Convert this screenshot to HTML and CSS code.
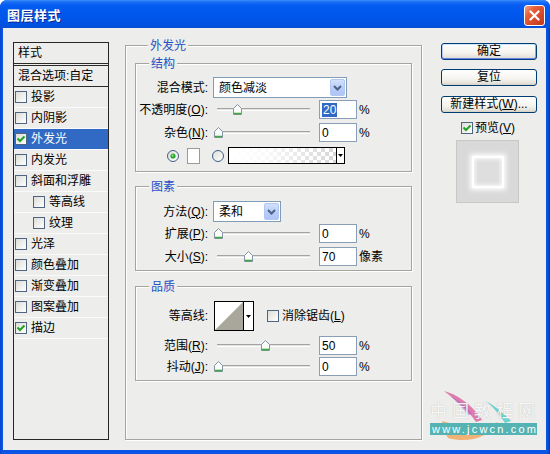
FILE: index.html
```html
<!DOCTYPE html>
<html>
<head>
<meta charset="utf-8">
<title>图层样式</title>
<link rel="stylesheet" href="styles.css">
</head>
<body>
<div class="window">
  <div class="titlebar">
    <span class="title">图层样式</span>
    <span class="close"><svg width="11" height="11" viewBox="0 0 11 11"><path d="M1.5 1.5l8 8M9.5 1.5l-8 8" stroke="#fff" stroke-width="2.2" stroke-linecap="round"/></svg></span>
  </div>
  <div class="client">
    <div class="stylelist">
      <div class="li head">样式</div>
      <div class="li blend">混合选项:自定</div>
      <div class="li"><span class="cb"></span>投影</div>
      <div class="li"><span class="cb"></span>内阴影</div>
      <div class="li sel"><span class="cb"><svg width="10" height="10" viewBox="0 0 10 10"><path d="M1.5 4.5l2.5 2.5 4.5-4.5" fill="none" stroke="#21A121" stroke-width="2"/></svg></span>外发光</div>
      <div class="li"><span class="cb"></span>内发光</div>
      <div class="li"><span class="cb"></span>斜面和浮雕</div>
      <div class="li sub"><span class="cb"></span>等高线</div>
      <div class="li sub"><span class="cb"></span>纹理</div>
      <div class="li"><span class="cb"></span>光泽</div>
      <div class="li"><span class="cb"></span>颜色叠加</div>
      <div class="li"><span class="cb"></span>渐变叠加</div>
      <div class="li"><span class="cb"></span>图案叠加</div>
      <div class="li"><span class="cb"><svg width="10" height="10" viewBox="0 0 10 10"><path d="M1.5 4.5l2.5 2.5 4.5-4.5" fill="none" stroke="#21A121" stroke-width="2"/></svg></span>描边</div>
    </div>

    <div class="group outer">
      <div class="gtitle">外发光</div>

      <div class="group inner g1">
        <div class="gtitle">结构</div>
        <div class="row r-blend">
          <span class="lbl">混合模式:</span>
          <div class="combo w-blend"><span class="ctext">颜色减淡</span><span class="cbtn"><svg width="9" height="6" viewBox="0 0 9 6"><path d="M1 1l3.5 3.5L8 1" fill="none" stroke="#4D6185" stroke-width="2"/></svg></span></div>
        </div>
        <div class="row r-op">
          <span class="lbl">不透明度(<u>O</u>):</span>
          <div class="slider"><div class="track"></div><svg class="thumb" style="left:19px" width="9" height="11" viewBox="0 0 9 11"><path d="M4.5 .5L8.5 4.5V10.5H.5V4.5Z" fill="#FAFCFA" stroke="#8393A3"/><path d="M1 9.5H8" stroke="#3DA83D" stroke-width="1.6"/></svg></div>
          <span class="inp"><span class="hl">20</span></span><span class="unit">%</span>
        </div>
        <div class="row r-noise">
          <span class="lbl">杂色(<u>N</u>):</span>
          <div class="slider"><div class="track"></div><svg class="thumb" style="left:0px" width="9" height="11" viewBox="0 0 9 11"><path d="M4.5 .5L8.5 4.5V10.5H.5V4.5Z" fill="#FAFCFA" stroke="#8393A3"/><path d="M1 9.5H8" stroke="#3DA83D" stroke-width="1.6"/></svg></div>
          <span class="inp">0</span><span class="unit">%</span>
        </div>
        <div class="row r-color">
          <svg class="radio" width="12" height="12" viewBox="0 0 12 12"><defs><linearGradient id="rg1" x1="0" y1="0" x2="1" y2="1"><stop offset="0" stop-color="#DCDCD7"/><stop offset="1" stop-color="#fff"/></linearGradient></defs><circle cx="6" cy="6" r="5.5" fill="url(#rg1)" stroke="#3E5D85"/><circle cx="6" cy="6" r="2.6" fill="#2EA82E"/><circle cx="5.5" cy="5.5" r="1" fill="#9BE09B"/></svg>
          <span class="swatch"></span>
          <svg class="radio r2" width="12" height="12" viewBox="0 0 12 12"><circle cx="6" cy="6" r="5.5" fill="url(#rg1)" stroke="#3E5D85"/></svg>
          <div class="grad"><span class="gfill"></span><span class="garrow"><svg width="5" height="3" viewBox="0 0 5 3"><path d="M0 0H5L2.5 3Z" fill="#000"/></svg></span></div>
        </div>
      </div>

      <div class="group inner g2">
        <div class="gtitle">图素</div>
        <div class="row r-method">
          <span class="lbl">方法(<u>Q</u>):</span>
          <div class="combo w-method"><span class="ctext">柔和</span><span class="cbtn"><svg width="9" height="6" viewBox="0 0 9 6"><path d="M1 1l3.5 3.5L8 1" fill="none" stroke="#4D6185" stroke-width="2"/></svg></span></div>
        </div>
        <div class="row r-spread">
          <span class="lbl">扩展(<u>P</u>):</span>
          <div class="slider"><div class="track"></div><svg class="thumb" style="left:0px" width="9" height="11" viewBox="0 0 9 11"><path d="M4.5 .5L8.5 4.5V10.5H.5V4.5Z" fill="#FAFCFA" stroke="#8393A3"/><path d="M1 9.5H8" stroke="#3DA83D" stroke-width="1.6"/></svg></div>
          <span class="inp">0</span><span class="unit">%</span>
        </div>
        <div class="row r-size">
          <span class="lbl">大小(<u>S</u>):</span>
          <div class="slider"><div class="track"></div><svg class="thumb" style="left:30px" width="9" height="11" viewBox="0 0 9 11"><path d="M4.5 .5L8.5 4.5V10.5H.5V4.5Z" fill="#FAFCFA" stroke="#8393A3"/><path d="M1 9.5H8" stroke="#3DA83D" stroke-width="1.6"/></svg></div>
          <span class="inp">70</span><span class="unit">像素</span>
        </div>
      </div>

      <div class="group inner g3">
        <div class="gtitle">品质</div>
        <div class="row r-contour">
          <span class="lbl">等高线:</span>
          <div class="contour"><svg class="cprev" width="28" height="28" viewBox="0 0 28 28"><rect width="28" height="28" fill="#fff"/><path d="M0 28L28 0V28Z" fill="#A9A69C"/></svg><span class="carrow"><svg width="5" height="3" viewBox="0 0 5 3"><path d="M0 0H5L2.5 3Z" fill="#000"/></svg></span></div>
          <span class="cb big"></span><span class="cbl">消除锯齿(<u>L</u>)</span>
        </div>
        <div class="row r-range">
          <span class="lbl">范围(<u>R</u>):</span>
          <div class="slider"><div class="track"></div><svg class="thumb" style="left:47px" width="9" height="11" viewBox="0 0 9 11"><path d="M4.5 .5L8.5 4.5V10.5H.5V4.5Z" fill="#FAFCFA" stroke="#8393A3"/><path d="M1 9.5H8" stroke="#3DA83D" stroke-width="1.6"/></svg></div>
          <span class="inp">50</span><span class="unit">%</span>
        </div>
        <div class="row r-jitter">
          <span class="lbl">抖动(<u>J</u>):</span>
          <div class="slider"><div class="track"></div><svg class="thumb" style="left:0px" width="9" height="11" viewBox="0 0 9 11"><path d="M4.5 .5L8.5 4.5V10.5H.5V4.5Z" fill="#FAFCFA" stroke="#8393A3"/><path d="M1 9.5H8" stroke="#3DA83D" stroke-width="1.6"/></svg></div>
          <span class="inp">0</span><span class="unit">%</span>
        </div>
      </div>
    </div>

    <div class="side">
      <div class="btn default">确定</div>
      <div class="btn b2">复位</div>
      <div class="btn b3">新建样式(<u>W</u>)...</div>
      <div class="pv"><span class="cb big"><svg width="10" height="10" viewBox="0 0 10 10"><path d="M1.5 4.5l2.5 2.5 4.5-4.5" fill="none" stroke="#21A121" stroke-width="2"/></svg></span><span>预览(<u>V</u>)</span></div>
      <div class="preview"><div class="glow"></div></div>
    </div>
  </div>

  <div class="watermark">
    <svg class="wm-strokes" width="112" height="56" viewBox="0 0 112 56">
      <path d="M16 3C28 6 44 16 54 32L48 34C40 22 28 12 16 3Z" fill="#D9609C" opacity=".8"/>
      <path d="M22 8C30 12 38 18 44 26L40 27C35 20 29 14 22 8Z" fill="#A84FC4" opacity=".5"/>
      <path d="M58 13C67 18 76 25 83 33L77 35C72 27 66 20 58 13Z" fill="#5ECFCB" opacity=".9"/>
      <path d="M14 33C34 39 52 42 70 34C63 48 42 56 20 50C17 45 15 40 14 33Z" fill="#F2A257" opacity=".8"/>
    </svg>
    <div class="wm-cn">中国教程网</div>
    <div class="wm-url">www.jcwcn.com</div>
  </div>
</div>
</body>
</html>
```

FILE: styles.css
```css
* { box-sizing: border-box; }
html, body { margin: 0; padding: 0; background: #fff; }
body {
  width: 550px;
  height: 454px;
  overflow: hidden;
  font-family: "Liberation Sans", "Noto Sans CJK SC", sans-serif;
  font-size: 12px;
  color: #000;
}
u { text-decoration: underline; text-underline-offset: 1px; }

.window {
  position: relative;
  width: 550px;
  height: 454px;
  display: flex;
  flex-direction: column;
  background: linear-gradient(to right, #0842C8 0, #0A55E6 2px, #0A55E6 546px, #0A4CD9 548px, #0736B3 550px);
  border-radius: 7px 7px 0 0;
  overflow: hidden;
}

.titlebar {
  height: 28px;
  flex: none;
  display: flex;
  align-items: center;
  justify-content: space-between;
  padding: 2px 5px 0 7px;
  background: linear-gradient(to bottom, #3B8DFB 0, #1A6FF6 2px, #065CF0 5px, #0058EE 12px, #0055E8 20px, #004FDD 26px, #0A4FD8 28px);
}
.title {
  color: #fff;
  font-family: "Noto Sans CJK SC", sans-serif;
  font-weight: bold;
  font-size: 13px;
  line-height: 16px;
  letter-spacing: 0.5px;
  text-shadow: 1px 1px 0 #0A2690;
}
.close {
  width: 21px;
  height: 21px;
  border: 1px solid #fff;
  border-radius: 3px;
  background: linear-gradient(135deg, #F2A58E 0%, #E6603A 30%, #D5482A 65%, #C0391A 100%);
  display: flex;
  align-items: center;
  justify-content: center;
}

.client {
  flex: 1;
  margin: 0 4px 4px 3px;
  background: #EDEDEB;
  display: flex;
  align-items: flex-start;
  padding: 14px 0 0 10px;
}

/* style list */
.stylelist {
  width: 96px;
  height: 398px;
  flex: none;
  border: 1px solid #262626;
  background: #EDEDEB;
}
.li {
  height: 21px;
  display: flex;
  align-items: center;
  padding-left: 1px;
  border-bottom: 1px solid #FAFAFA;
  white-space: nowrap;
  line-height: 14px;
}
.li.head {
  height: 23px;
  padding-left: 4px;
  border-bottom: 3px double #2A2A2A;
}
.li.blend {
  padding-left: 4px;
  border-bottom: 1px solid #2A2A2A;
}
.li.sub { padding-left: 19px; }
.li.sel { background: #316AC5; color: #fff; }
.li .cb { margin-right: 4px; }

.cb {
  width: 12px;
  height: 12px;
  flex: none;
  border: 1px solid #4E6480;
  background: linear-gradient(135deg, #DCDCD7, #FFFFFF);
  display: inline-flex;
  align-items: center;
  justify-content: center;
}
.cb.big { width: 12px; height: 12px; }

/* group boxes */
.group {
  border: 1px solid #A5A5A0;
  box-shadow: inset 1px 1px 0 #fff, 1px 1px 0 #fff;
}
.gtitle {
  margin: -8px 0 0 13px;
  padding: 0 2px;
  width: fit-content;
  height: 16px;
  line-height: 16px;
  background: #EDEDEB;
  color: #1F50C4;
  white-space: nowrap;
}
.outer {
  width: 297px;
  height: 395px;
  flex: none;
  margin: 3px 0 0 16px;
  padding: 0 9px;
}
.inner { width: 277px; }
.g1 { margin-top: 9px; padding-bottom: 7px; }
.g2 { margin-top: 14px; padding-bottom: 4px; }
.g3 { margin-top: 15px; padding-bottom: 4px; }

.row {
  display: flex;
  align-items: center;
  white-space: nowrap;
}
.lbl {
  width: 72px;
  flex: none;
  text-align: right;
  line-height: 14px;
}
.r-blend { margin-top: 5px; height: 21px; }
.r-op { margin-top: 2px; height: 19px; }
.r-noise { margin-top: 4px; height: 19px; }
.r-color { margin-top: 5px; height: 17px; margin-left: 31px; }
.r-method { margin-top: 6px; height: 21px; }
.r-spread { margin-top: 2px; height: 19px; }
.r-size { margin-top: 4px; height: 19px; }
.r-contour { margin-top: 6px; height: 30px; }
.r-range { margin-top: 5px; height: 19px; }
.r-jitter { margin-top: 2px; height: 19px; }

/* combo */
.combo {
  margin-left: 5px;
  height: 21px;
  border: 1px solid #7F9DB9;
  background: #fff;
  display: flex;
  align-items: center;
}
.w-blend { width: 134px; }
.w-method { width: 68px; }
.ctext { padding-left: 5px; line-height: 14px; }
.cbtn {
  margin: 0 1px 0 auto;
  width: 15px;
  height: 17px;
  border: 1px solid #B2C6F2;
  border-radius: 2px;
  background: linear-gradient(#D2E0FD, #B6CBF8 60%, #AFC5F6);
  display: flex;
  align-items: center;
  justify-content: center;
}

/* slider */
.slider {
  position: relative;
  width: 98px;
  height: 11px;
  margin-left: 6px;
  flex: none;
  display: flex;
  align-items: center;
}
.track {
  flex: 1;
  height: 3px;
  margin: 0 2px 0 3px;
  border-top: 1px solid #A4A4A4;
  border-bottom: 1px solid #FFFFFF;
  background: #E4E2E0;
}
.thumb { position: absolute; top: 0; }

/* input */
.inp {
  width: 38px;
  height: 19px;
  flex: none;
  margin-left: 7px;
  padding-left: 2px;
  border: 1px solid #8A9EB8;
  background: #fff;
  display: flex;
  align-items: center;
  line-height: 14px;
}
.hl { background: #316AC5; color: #fff; padding: 0 1px; }
.unit { margin-left: 2px; line-height: 14px; }

/* colour row */
.radio { flex: none; }
.swatch {
  width: 13px;
  height: 16px;
  margin-left: 8px;
  background: #fff;
  border: 1px solid #9A9A9A;
  flex: none;
}
.r2 { margin-left: 12px; }
.grad {
  width: 117px;
  height: 17px;
  margin-left: 4px;
  border: 1px solid #000;
  display: flex;
  flex: none;
}
.gfill {
  flex: 1;
  background:
    linear-gradient(to right, #fff 0%, rgba(255,255,255,0.85) 35%, rgba(255,255,255,0) 100%),
    repeating-conic-gradient(#D6D6D6 0 25%, #FFFFFF 0 50%) 0 0 / 8px 8px;
}
.garrow {
  width: 8px;
  border-left: 1px solid #000;
  background: #fff;
  display: flex;
  align-items: center;
  justify-content: center;
}

/* contour */
.contour {
  width: 40px;
  height: 30px;
  margin-left: 6px;
  border: 1px solid #000;
  background: #fff;
  display: flex;
  flex: none;
}
.cprev { display: block; }
.carrow {
  flex: 1;
  border-left: 1px solid #000;
  display: flex;
  align-items: center;
  justify-content: center;
}
.r-contour .cb { margin-left: 13px; }
.cbl { margin-left: 3px; line-height: 14px; }

/* right side */
.side {
  width: 96px;
  flex: none;
  margin: 1px 0 0 19px;
  display: flex;
  flex-direction: column;
}
.btn {
  height: 17px;
  border: 1px solid #003C74;
  border-radius: 3px;
  background: linear-gradient(#FFFFFF 0%, #F4F3EE 60%, #E6E4DC 85%, #D6D0C5 100%);
  text-align: center;
  line-height: 15px;
  white-space: nowrap;
}
.btn.default {
  box-shadow: inset 0 1px 0 #CEE7FF, inset 0 -1px 0 #6982EE, inset 1px 0 0 #B5CFFA, inset -1px 0 0 #8AA6EE;
}
.b2 { margin-top: 9px; }
.b3 { margin-top: 10px; }
.pv {
  margin: 8px 0 0 20px;
  height: 14px;
  display: flex;
  align-items: center;
  gap: 2px;
  line-height: 14px;
  white-space: nowrap;
}
.preview {
  width: 63px;
  height: 63px;
  margin: 5px 0 0 15px;
  background: #D9D9D9;
  border: 1px solid #C8C8C8;
  display: flex;
  align-items: center;
  justify-content: center;
}
.glow {
  width: 32px;
  height: 32px;
  border: 2px solid #fff;
  background: #DEDEDE;
  box-shadow: 0 0 5px 2px rgba(255,255,255,0.95), inset 0 0 4px 1px rgba(255,255,255,0.9);
}

/* watermark */
.watermark {
  position: absolute;
  left: 428px;
  top: 388px;
  width: 112px;
  height: 56px;
  display: flex;
  flex-direction: column;
  justify-content: flex-end;
  padding: 0 0 9px 2px;
}
.wm-strokes { position: absolute; left: 0; top: 0; }
.wm-cn {
  position: relative;
  font-family: "Noto Sans CJK SC", sans-serif;
  font-size: 17px;
  line-height: 20px;
  letter-spacing: 5px;
  color: rgba(255,255,255,0.9);
  text-shadow: 0 0 1px rgba(140,140,140,0.6);
  white-space: nowrap;
}
.wm-url {
  position: relative;
  width: 107px;
  height: 12px;
  margin-top: 3px;
  background: #55B3B3;
  color: #fff;
  font-size: 11px;
  line-height: 12px;
  letter-spacing: 2.2px;
  padding-left: 2px;
  white-space: nowrap;
  overflow: hidden;
}
```
